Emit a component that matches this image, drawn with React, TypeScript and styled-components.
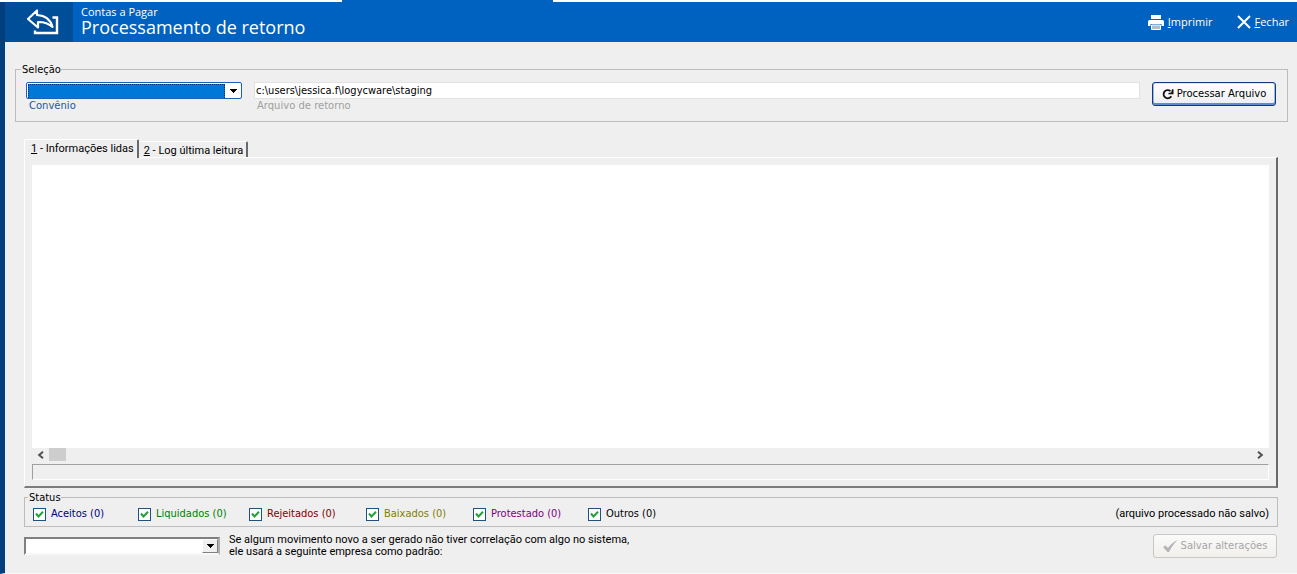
import React, { useState } from "react";
import styled, { createGlobalStyle, css } from "styled-components";

const tahoma = '"DejaVu Sans Condensed", Tahoma, sans-serif';
const tahomaNarrow = 'Roboto, Tahoma, sans-serif';
const verdana = '"DejaVu Sans", Verdana, sans-serif';
const segoe = '"Open Sans", "Noto Sans", sans-serif';

const GlobalStyle = createGlobalStyle`
  * { box-sizing: border-box; }
  body { margin: 0; background: #efefef; color: #000; font: 11px/14px ${tahoma}; }
  button, input, select, textarea { font: inherit; color: inherit; margin: 0; }
`;

const Window = styled.div`
  display: flex;
  flex-direction: column;
  min-height: 100vh;
`;

const TopStrip = styled.div`
  height: 2px;
  background: #fff;
`;

const ActiveMark = styled.div`
  width: 211px;
  height: 2px;
  margin-left: 342px;
  background: #0062c0;
`;

const Frame = styled.div`
  flex: 1;
  display: flex;
  flex-direction: column;
  border-left: 5px solid #003f7c;
  border-bottom: 1px solid #f8f8f8;
`;

const Header = styled.header`
  display: flex;
  height: 40px;
  background: #0062c0;
  color: #fff;
  font-family: ${segoe};
`;

const BackButton = styled.button`
  width: 68px;
  border: 0;
  padding: 0 0 0 8px;
  background: #004e98;
  display: grid;
  place-items: center;
`;

const Titles = styled.div`
  flex: 1;
  padding: 4px 0 0 8px;
`;

const Crumb = styled.div`
  font-size: 11px;
  line-height: 12px;
`;

const Title = styled.h1`
  margin: 0;
  font-size: 18px;
  line-height: 18px;
  font-weight: 400;
`;

const Actions = styled.nav`
  display: flex;
  align-items: center;
  gap: 24px;
  padding-right: 8px;
`;

const Action = styled.button`
  display: flex;
  align-items: center;
  gap: 4px;
  padding: 0;
  border: 0;
  background: none;
  font-size: 11px;
`;

const Group = styled.fieldset<{ $pad: string }>`
  min-width: 0;
  margin: 0;
  padding: ${(p) => p.$pad};
  border: 1px solid #bcbcbc;
  display: flex;
`;

const Legend = styled.legend`
  padding: 2px 0 0 1px;
  margin-left: -5px;
  line-height: 12px;
`;

const Selection = styled.div`
  padding: 20px 9px 0 10px;
`;

const Field = styled.div<{ $width?: number }>`
  display: flex;
  flex-direction: column;
  margin-right: 12px;
  ${(p) => (p.$width ? css`width: ${p.$width}px;` : css`flex: 1;`)}
`;

const Caption = styled.label<{ $color: string }>`
  padding-left: 3px;
  font-family: ${verdana};
  font-size: 10px;
  line-height: 14px;
  color: ${(p) => p.$color};
`;

const Combo = styled.div<{ $focused?: boolean }>`
  display: flex;
  background: #fff;
  ${(p) =>
    p.$focused
      ? css`
          height: 17px;
          border: 1px solid #1a62b5;
          border-radius: 2px;
          padding: 1px 0 0 1px;
        `
      : css`
          width: 196px;
          height: 18px;
          border: 2px solid;
          border-color: #808080 #b0b0b0 #f8f8f8 #808080;
        `}
`;

const ComboSelect = styled.select<{ $focused?: boolean }>`
  appearance: none;
  flex: 1;
  min-width: 0;
  padding: 0;
  outline: 0;
  border-radius: 0;
  background: ${(p) => (p.$focused ? "#0078d7" : "#fff")};
  border: ${(p) => (p.$focused ? "1px dotted #12304c" : "0")};
  border-bottom: 0;
`;

const ComboArrow = styled.span<{ $raised?: boolean }>`
  width: 16px;
  display: grid;
  place-items: center;
  ${(p) =>
    p.$raised &&
    css`
      background: #efefef;
      border: 1px solid;
      border-color: #fff #808080 #808080 #fff;
    `}
`;

const PathInput = styled.input`
  height: 17px;
  padding: 0 1px;
  border: 1px solid #e2e2e2;
  background: #fff;
  outline: 0;
`;

const PushButton = styled.button`
  display: flex;
  align-items: center;
  justify-content: center;
  gap: 3px;
  width: 124px;
  height: 24px;
  padding: 0;
  border: 1px solid #10397c;
  border-radius: 3px;
  background: linear-gradient(#fff, #ededf2);
  box-shadow: inset 0 -2px #6488d4, inset 1px 0 #9ab6ec, inset -1px 0 #9ab6ec, inset 0 1px #dce8fc;
  font-family: ${verdana};
  font-size: 10px;
  &:disabled {
    border-color: #c9c7c3;
    background: linear-gradient(#fafafa, #f2f0ed);
    box-shadow: none;
    color: #a5a5a5;
  }
`;

const Body = styled.main`
  flex: 1;
  display: flex;
  flex-direction: column;
  padding: 17px 19px 15px;
`;

const Tabs = styled.div`
  display: flex;
  align-items: flex-end;
  height: 18px;
`;

const Tab = styled.button<{ $active: boolean }>`
  height: ${(p) => (p.$active ? 19 : 16)}px;
  margin-bottom: ${(p) => (p.$active ? -1 : 0)}px;
  padding: ${(p) => (p.$active ? "0 3px 0 6px" : "2px 3px 0 4px")};
  border: 1px solid;
  border-color: #fff #696969 transparent ${(p) => (p.$active ? "#fff" : "#efefef")};
  border-right-width: 2px;
  border-bottom: 0;
  border-radius: 2px 2px 0 0;
  background: #efefef;
  font-family: ${tahomaNarrow};
  z-index: ${(p) => (p.$active ? 1 : 0)};
`;

const Panel = styled.section`
  flex: 1;
  display: flex;
  flex-direction: column;
  padding: 7px 7px 6px;
  border: 1px solid;
  border-color: #fff #696969 #7c7c7c #fff;
  border-right-width: 2px;
  border-bottom-width: 2px;
`;

const Memo = styled.textarea`
  flex: 1;
  min-height: 120px;
  padding: 2px;
  border: 0;
  outline: 0;
  resize: none;
  background: #fff;
`;

const ScrollBar = styled.div`
  display: flex;
  align-items: center;
  height: 13px;
`;

const ScrollButton = styled.button`
  width: 17px;
  height: 13px;
  padding: 0;
  border: 0;
  background: none;
  display: grid;
  place-items: center;
`;

const Thumb = styled.div`
  width: 17px;
  height: 13px;
  background: #cdcdcd;
`;

const Track = styled.div`
  flex: 1;
`;

const StatusBar = styled.div`
  height: 16px;
  margin-top: 3px;
  border: 1px solid;
  border-color: #a0a0a0 #fff #fff #a0a0a0;
`;

const StatusGroup = styled.div`
  margin-top: 2px;
`;

const Checks = styled.div`
  flex: 1;
  display: grid;
  grid-template-columns: 105px 111px 117px 107px 115px 1fr;
`;

const CheckLabel = styled.label<{ $color: string }>`
  display: flex;
  align-items: center;
  gap: 5px;
  color: ${(p) => p.$color};
`;

const CheckHolder = styled.span`
  display: grid;
  width: 13px;
  height: 13px;
  > * { grid-area: 1 / 1; }
  > svg { pointer-events: none; }
`;

const CheckInput = styled.input`
  appearance: none;
  width: 13px;
  height: 13px;
  border: 1px solid #1c5180;
  background: #fff;
  &:not(:checked) + svg { visibility: hidden; }
`;

const Note = styled.span`
  font-family: ${tahomaNarrow};
`;

const Footer = styled.div`
  display: flex;
  align-items: center;
  margin-top: 7px;
  padding-right: 1px;
`;

const Hint = styled.label`
  flex: 1;
  padding-left: 9px;
  font-family: ${tahomaNarrow};
  line-height: 12px;
`;

const Arrow = () => (
  <svg width="7" height="4" viewBox="0 0 7 4" shapeRendering="crispEdges">
    <path d="M0 0h7L3.5 4z" fill="#000" />
  </svg>
);

const BackIcon = () => (
  <svg width="34" height="28" viewBox="0 0 34 28" fill="none" stroke="#fff" strokeWidth="2.200" strokeLinejoin="round" strokeLinecap="round">
    <path d="M2 11 11 2.500V7c8 .5 13.500 4.500 15.500 12C22 15 17.500 13.800 12 14v5.500z" />
    <path d="M9 22.500V25h22V9.500h-4.500" strokeWidth="2.400" strokeLinejoin="miter" strokeLinecap="butt" />
  </svg>
);

const PrinterIcon = () => (
  <svg width="16" height="15" viewBox="0 0 16 15">
    <path d="M3 0h10v4H3z" fill="#fff" />
    <path d="M1.500 5h13A1.500 1.500 0 0 1 16 6.500V11h-2.500V9h-11v2H0V6.500A1.500 1.500 0 0 1 1.500 5z" fill="#fff" />
    <path d="M3.500 10h9v4.500h-9z" fill="#b8bcc0" stroke="#fff" />
  </svg>
);

const CloseIcon = () => (
  <svg width="14" height="14" viewBox="0 0 14 14" stroke="#fff" strokeWidth="2">
    <path d="M1 1l12 12M13 1 1 13" />
  </svg>
);

const ReloadIcon = () => (
  <svg width="12" height="11" viewBox="0 0 12 11" fill="none">
    <path d="M8.500 2.200A4.100 4.100 0 1 0 9.300 7.200" stroke="#111" strokeWidth="1.800" />
    <path d="M11.500 .3v4.900H6.400V4l2.800-.4L10 .3z" fill="#111" />
  </svg>
);

const CheckIcon = () => (
  <svg width="13" height="13" viewBox="0 0 13 13" fill="none">
    <path d="M3 5.500 5.500 8.500 10 3.800" stroke="#21a13a" strokeWidth="2" />
  </svg>
);

const ConfirmIcon = () => (
  <svg width="15" height="12" viewBox="0 0 15 12">
    <path d="M0 7 2.500 5.500 5 8C7.500 4.500 10.500 2 14.500 0 11 3.500 8 7.500 6 12H4.500z" fill="#b4b4b4" />
  </svg>
);

const Chevron = ({ right }: { right?: boolean }) => (
  <svg width="7" height="8" viewBox="0 0 7 8" fill="none" stroke="#505050" strokeWidth="2">
    <path d={right ? "M1 .8 4.800 4 1 7.200" : "M6 .8 2.200 4 6 7.200"} />
  </svg>
);

const statuses = [
  { name: "Aceitos (0)", color: "#000080" },
  { name: "Liquidados (0)", color: "#008000" },
  { name: "Rejeitados (0)", color: "#800000" },
  { name: "Baixados (0)", color: "#808000" },
  { name: "Protestado (0)", color: "#800080" },
  { name: "Outros (0)", color: "#000000" },
];

export default function App() {
  const [tab, setTab] = useState(0);
  return (
    <>
      <GlobalStyle />
      <Window>
        <TopStrip>
          <ActiveMark />
        </TopStrip>
        <Frame>
          <Header>
            <BackButton aria-label="Voltar">
              <BackIcon />
            </BackButton>
            <Titles>
              <Crumb>Contas a Pagar</Crumb>
              <Title>Processamento de retorno</Title>
            </Titles>
            <Actions>
              <Action>
                <PrinterIcon />
                <span><u>I</u>mprimir</span>
              </Action>
              <Action>
                <CloseIcon />
                <span><u>F</u>echar</span>
              </Action>
            </Actions>
          </Header>

          <Selection>
            <Group $pad="6px 11px 8px 10px">
              <Legend>Seleção</Legend>
              <Field $width={216}>
                <Combo $focused>
                  <ComboSelect id="convenio" $focused defaultValue="">
                    <option value="" />
                  </ComboSelect>
                  <ComboArrow><Arrow /></ComboArrow>
                </Combo>
                <Caption htmlFor="convenio" $color="#1c57a5">Convênio</Caption>
              </Field>
              <Field>
                <PathInput id="arquivo" defaultValue="c:\users\jessica.f\logycware\staging" />
                <Caption htmlFor="arquivo" $color="#a0a0a0">Arquivo de retorno</Caption>
              </Field>
              <PushButton>
                <ReloadIcon />
                Processar Arquivo
              </PushButton>
            </Group>
          </Selection>

          <Body>
            <Tabs role="tablist">
              <Tab role="tab" aria-selected={tab === 0} $active={tab === 0} onClick={() => setTab(0)}>
                <u>1</u> - Informações lidas
              </Tab>
              <Tab role="tab" aria-selected={tab === 1} $active={tab === 1} onClick={() => setTab(1)}>
                <u>2</u> - Log última leitura
              </Tab>
            </Tabs>
            <Panel role="tabpanel">
              <Memo aria-label="Conteúdo" readOnly />
              <ScrollBar>
                <ScrollButton aria-label="Rolar à esquerda"><Chevron /></ScrollButton>
                <Thumb />
                <Track />
                <ScrollButton aria-label="Rolar à direita"><Chevron right /></ScrollButton>
              </ScrollBar>
              <StatusBar />
            </Panel>

            <StatusGroup>
              <Group $pad="3px 8px 5px">
                <Legend>Status</Legend>
                <Checks>
                  {statuses.map((s) => (
                    <CheckLabel key={s.name} $color={s.color}>
                      <CheckHolder>
                        <CheckInput type="checkbox" defaultChecked />
                        <CheckIcon />
                      </CheckHolder>
                      {s.name}
                    </CheckLabel>
                  ))}
                </Checks>
                <Note>(arquivo processado não salvo)</Note>
              </Group>
            </StatusGroup>

            <Footer>
              <Combo>
                <ComboSelect id="empresa" defaultValue="">
                  <option value="" />
                </ComboSelect>
                <ComboArrow $raised><Arrow /></ComboArrow>
              </Combo>
              <Hint htmlFor="empresa">
                Se algum movimento novo a ser gerado não tiver correlação com algo no sistema,
                <br />
                ele usará a seguinte empresa como padrão:
              </Hint>
              <PushButton disabled>
                <ConfirmIcon />
                Salvar alterações
              </PushButton>
            </Footer>
          </Body>
        </Frame>
      </Window>
    </>
  );
}
